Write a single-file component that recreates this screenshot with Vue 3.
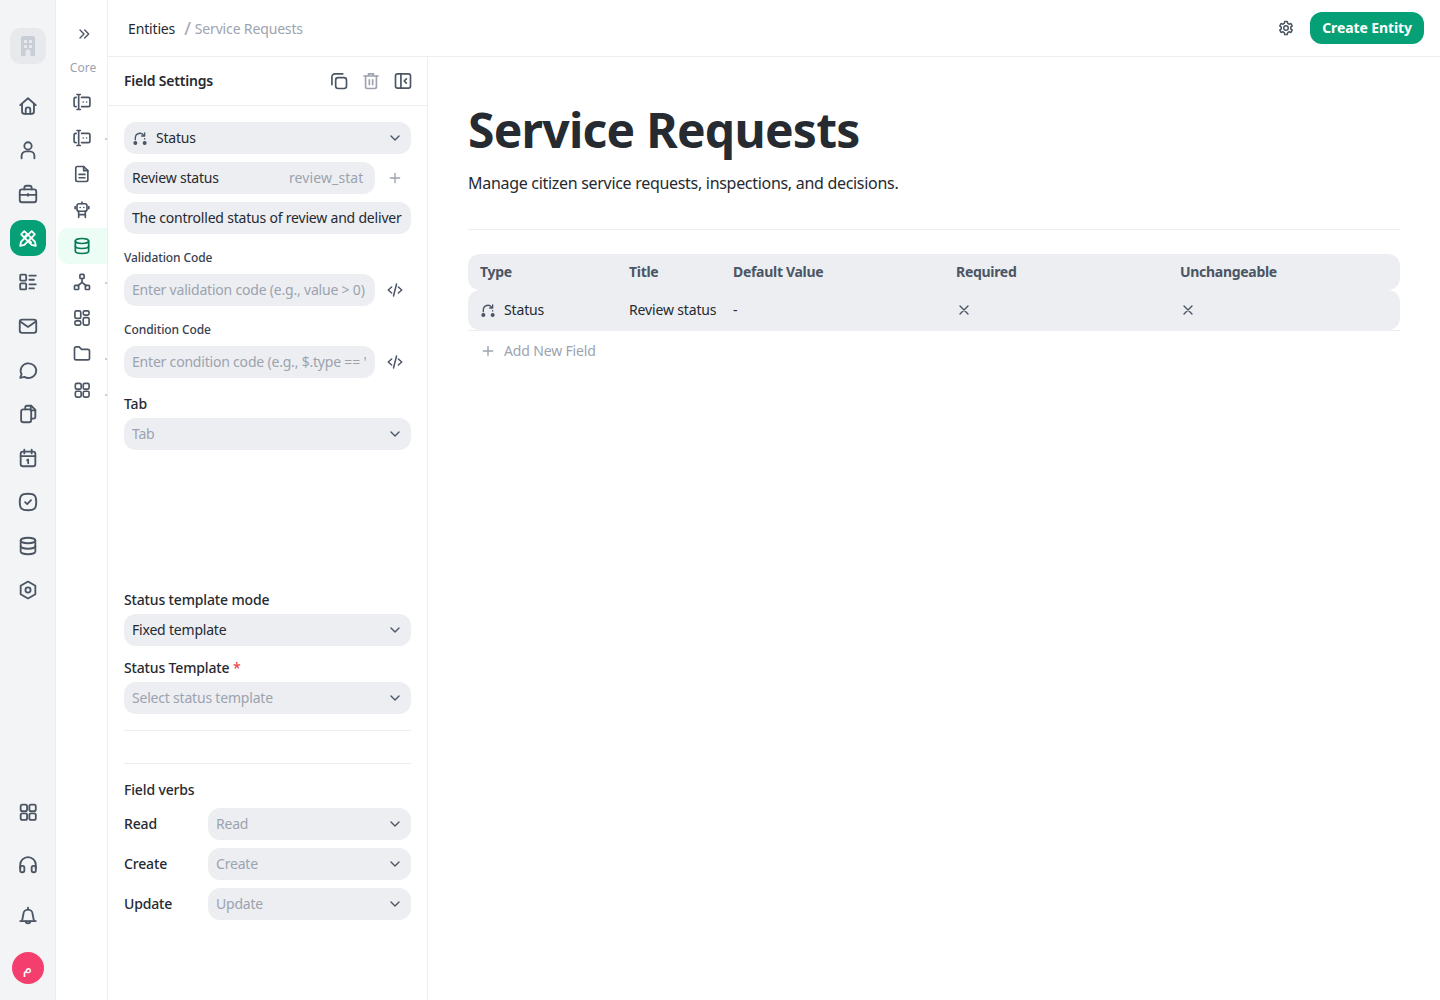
<template>
  <div class="app">
    <aside class="rail">
      <div class="logo"><svg viewBox="0 0 24 24" width="24" height="24" v-html="icons.building"></svg></div>
      <div class="rail-top">
        <div v-for="n in railTop" :key="n" class="rail-btn" :class="{ active: n === 'tools' }">
          <svg viewBox="0 0 24 24" width="22" height="22" class="ic" v-html="icons[n]"></svg>
        </div>
      </div>
      <div class="rail-bottom">
        <div v-for="n in railBottom" :key="n" class="rail-btn">
          <svg viewBox="0 0 24 24" width="22" height="22" class="ic" v-html="icons[n]"></svg>
        </div>
        <div class="avatar">م</div>
      </div>
    </aside>

    <nav class="subnav">
      <div class="expand"><svg viewBox="0 0 24 24" width="16" height="16" class="ic" v-html="icons.chevrons"></svg></div>
      <div class="core">Core</div>
      <div v-for="(n, i) in subnav" :key="i" class="sub-item" :class="{ active: n === 'database' }">
        <svg viewBox="0 0 24 24" width="20" height="20" class="ic" v-html="icons[n]"></svg>
        <i v-if="[1, 5, 7, 8].includes(i)" class="dot" :class="{ low: i > 5 }"></i>
      </div>
    </nav>

    <div class="content">
      <header class="topbar">
        <div class="crumbs">
          <span class="crumb">Entities</span>
          <span class="slash">/</span>
          <span class="crumb muted">Service Requests</span>
        </div>
        <div class="top-actions">
          <svg viewBox="0 0 24 24" width="18" height="18" class="ic" v-html="icons.gear"></svg>
          <button class="create">Create Entity</button>
        </div>
      </header>

      <div class="body">
        <section class="panel">
          <div class="panel-head">
            <span class="panel-title">Field Settings</span>
            <div class="panel-tools">
              <svg viewBox="0 0 24 24" width="20" height="20" class="ic" v-html="icons.copy"></svg>
              <svg viewBox="0 0 24 24" width="20" height="20" class="ic faded" v-html="icons.trash"></svg>
              <svg viewBox="0 0 24 24" width="20" height="20" class="ic" v-html="icons.sidebar"></svg>
            </div>
          </div>

          <div class="panel-body">
            <div class="field select">
              <svg viewBox="0 0 24 24" width="16" height="16" class="ic status-ic" v-html="icons.status"></svg>
              <span class="grow">Status</span>
              <svg viewBox="0 0 24 24" width="16" height="16" class="ic chev" v-html="icons.chevron"></svg>
            </div>

            <div class="row mt8">
              <div class="field grow-field">
                <span class="grow">Review status</span>
                <span class="key">review_stat</span>
              </div>
              <div class="side-btn"><svg viewBox="0 0 24 24" width="16" height="16" class="ic faded" v-html="icons.plus"></svg></div>
            </div>

            <div class="field mt8"><span class="clip">The controlled status of review and deliver</span></div>

            <div class="small-label">Validation Code</div>
            <div class="row">
              <div class="field grow-field ph"><span class="clip">Enter validation code (e.g., value &gt; 0)</span></div>
              <div class="side-btn"><svg viewBox="0 0 24 24" width="18" height="18" class="ic" v-html="icons.code"></svg></div>
            </div>

            <div class="small-label">Condition Code</div>
            <div class="row">
              <div class="field grow-field ph"><span class="clip">Enter condition code (e.g., $.type == '</span></div>
              <div class="side-btn"><svg viewBox="0 0 24 24" width="18" height="18" class="ic" v-html="icons.code"></svg></div>
            </div>

            <div class="label lb-tab">Tab</div>
            <div class="field select ph">
              <span class="grow">Tab</span>
              <svg viewBox="0 0 24 24" width="16" height="16" class="ic chev" v-html="icons.chevron"></svg>
            </div>

            <div class="label lb-mode">Status template mode</div>
            <div class="field select">
              <span class="grow">Fixed template</span>
              <svg viewBox="0 0 24 24" width="16" height="16" class="ic chev" v-html="icons.chevron"></svg>
            </div>

            <div class="label lb-template">Status Template <b class="req">*</b></div>
            <div class="field select ph">
              <span class="grow">Select status template</span>
              <svg viewBox="0 0 24 24" width="16" height="16" class="ic chev" v-html="icons.chevron"></svg>
            </div>

            <hr class="sep sep1" />
            <hr class="sep sep2" />

            <div class="label lb-verbs">Field verbs</div>
            <div v-for="v in verbs" :key="v" class="verb">
              <span class="verb-name">{{ v }}</span>
              <div class="field select ph verb-field">
                <span class="grow">{{ v }}</span>
                <svg viewBox="0 0 24 24" width="16" height="16" class="ic chev" v-html="icons.chevron"></svg>
              </div>
            </div>
          </div>
        </section>

        <main class="main">
          <h1>Service Requests</h1>
          <p class="sub">Manage citizen service requests, inspections, and decisions.</p>
          <div class="rule"></div>

          <div class="table">
            <div class="tr th">
              <span>Type</span><span>Title</span><span>Default Value</span><span>Required</span><span>Unchangeable</span>
            </div>
            <div class="tr td">
              <div class="type"><svg viewBox="0 0 24 24" width="16" height="16" class="ic status-ic" v-html="icons.status"></svg><span class="t">Status</span></div>
              <span class="t">Review status</span>
              <span class="t">-</span>
              <div><svg viewBox="0 0 24 24" width="16" height="16" class="ic" v-html="icons.x"></svg></div>
              <div><svg viewBox="0 0 24 24" width="16" height="16" class="ic" v-html="icons.x"></svg></div>
            </div>
          </div>
          <div class="add"><svg viewBox="0 0 24 24" width="16" height="16" class="ic faded" v-html="icons.plus"></svg><span class="t">Add New Field</span></div>
        </main>
      </div>
    </div>
  </div>
</template>

<script setup>
const railTop = ["home", "user", "briefcase", "tools", "list", "mail", "chat", "files", "calendar", "check", "database", "hexagon"];
const railBottom = ["grid", "headphones", "bell"];
const subnav = ["cursorBox", "cursorBox", "file", "robot", "database", "nodes", "layout", "folder", "grid"];
const verbs = ["Read", "Create", "Update"];

const icons = {
  building: '<path fill="#c9ced6" d="M5 4a2 2 0 0 1 2-2h10a2 2 0 0 1 2 2v18h-4.5v-4a2.5 2.5 0 0 0-5 0v4H5z"/><g fill="#e7e9ed"><rect x="8" y="6" width="3" height="3" rx=".6"/><rect x="13" y="6" width="3" height="3" rx=".6"/><rect x="8" y="11" width="3" height="3" rx=".6"/><rect x="13" y="11" width="3" height="3" rx=".6"/></g>',
  home: '<path d="M3.5 11 12 3.5 20.5 11"/><path d="M5.5 9.5V18a2.5 2.5 0 0 0 2.5 2.5h8a2.5 2.5 0 0 0 2.5-2.5V9.5"/><path d="M9.5 20.5V16a2.5 2.5 0 0 1 5 0v4.5"/>',
  user: '<circle cx="12" cy="7.5" r="4"/><path d="M5 21v-2.5a5 5 0 0 1 5-5h4a5 5 0 0 1 5 5V21"/>',
  briefcase: '<rect x="3" y="7" width="18" height="14" rx="2.5"/><path d="M8 7V5.5A2.5 2.5 0 0 1 10.5 3h3A2.5 2.5 0 0 1 16 5.5V7"/><path d="M3 13h18"/><path d="M12 12v2"/>',
  tools: '<path d="m4.5 8 3.5-3.5 11.5 11.5 1 4.500-4.500-1z"/><path d="m8 11 3-3"/><path d="M19.500 8 16 4.500 4.500 16l-1 4.500 4.500-1z"/><path d="m13.500 15 2 2"/>',
  list: '<rect x="3.500" y="4" width="6.500" height="6.500" rx="1"/><rect x="3.500" y="13.500" width="6.500" height="6.500" rx="1"/><path d="M13.500 5h7M13.500 9.500h5M13.500 14.500h7M13.500 19h5"/>',
  mail: '<rect x="3" y="5" width="18" height="14.500" rx="2.500"/><path d="m3.500 7 8.500 6 8.500-6"/>',
  chat: '<path d="M3.500 20.500 5 16.500A8.500 8 0 1 1 8 19.500z"/>',
  files: '<path d="M9 7V5a2 2 0 0 1 2-2h4.500L20 7.500V15a2 2 0 0 1-2 2h-2.500"/><path d="M15 3v5h5"/><rect x="4.500" y="7" width="11" height="14" rx="2.500"/>',
  calendar: '<rect x="4" y="5" width="16" height="16" rx="2.500"/><path d="M4 10h16M8 3v4M16 3v4"/><path d="M11 14.500l1.200-.8v4"/>',
  check: '<path d="M12 3c7 0 9 2 9 9s-2 9-9 9-9-2-9-9 2-9 9-9z"/><path d="m8.800 12.200 2.300 2.200 4.200-4.400"/>',
  database: '<ellipse cx="12" cy="6" rx="8" ry="3"/><path d="M4 6v12c0 1.700 3.600 3 8 3s8-1.300 8-3V6"/><path d="M4 12c0 1.700 3.600 3 8 3s8-1.300 8-3"/>',
  hexagon: '<path d="M12 2.800 20 7.400v9.200l-8 4.600-8-4.600V7.400z"/><circle cx="12" cy="12" r="2.800"/>',
  grid: '<rect x="4" y="4" width="7" height="7" rx="1.800"/><rect x="13.500" y="4" width="7" height="7" rx="1.800"/><rect x="4" y="13.500" width="7" height="7" rx="1.800"/><rect x="13.500" y="13.500" width="7" height="7" rx="1.800"/>',
  headphones: '<path d="M3.500 17v-4a8.500 8.500 0 0 1 17 0v4"/><rect x="3.500" y="14" width="4.500" height="7" rx="2"/><rect x="16" y="14" width="4.500" height="7" rx="2"/>',
  bell: '<path d="M3.500 17.500h17"/><path d="M5.500 17.500 7 10a5 5 0 0 1 10 0l1.500 7.500"/><path d="M12 3v2"/><path d="M9.500 17.500a2.500 2.500 0 0 0 5 0"/>',
  chevrons: '<path d="m6 6 6 6-6 6"/><path d="m13 6 6 6-6 6"/>',
  cursorBox: '<path d="M6 3h4M6 21h4M8 3v18"/><path d="M5 6.500H4.500a2 2 0 0 0-2 2v7a2 2 0 0 0 2 2H5"/><path d="M11.500 6.500h8a2 2 0 0 1 2 2v7a2 2 0 0 1-2 2h-8"/><path d="M13.500 12h.01M17.500 12h.01"/>',
  file: '<path d="M6.500 3H14l5 5v11a2 2 0 0 1-2 2H6.500a2 2 0 0 1-2-2V5a2 2 0 0 1 2-2z"/><path d="M14 3v5h5"/><path d="M8.500 12.500h7M8.500 16.500h7"/>',
  robot: '<rect x="6" y="4.500" width="12" height="9" rx="2.500"/><path d="M9.800 9h.01M14.200 9h.01"/><path d="M12 2.500v2M3.800 8v2.500M20.200 8v2.500"/><path d="M8 13.500V21M16 13.500V21M8 17.500h8"/>',
  nodes: '<rect x="9.500" y="2.800" width="5" height="5" rx="1"/><rect x="3" y="16" width="5" height="5" rx="1"/><rect x="16" y="16" width="5" height="5" rx="1"/><path d="M12 8v4.500M12 12.500l-5 4M12 12.500l5 4"/>',
  layout: '<rect x="3.500" y="3.500" width="7" height="9" rx="1.800"/><rect x="13.500" y="3.500" width="7" height="5" rx="1.800"/><rect x="3.500" y="15.500" width="7" height="5" rx="1.800"/><rect x="13.500" y="11.500" width="7" height="9" rx="1.800"/>',
  folder: '<path d="M3 5.500A2 2 0 0 1 5 3.500h3.500l3 3H19a2 2 0 0 1 2 2V17a2 2 0 0 1-2 2H5a2 2 0 0 1-2-2z"/>',
  gear: '<path d="M10.300 3.300h3.400l.6 2.600 1.700 1 2.600-.8 1.700 3-2 1.800v2.200l2 1.800-1.700 3-2.600-.8-1.700 1-.6 2.600h-3.400l-.6-2.600-1.700-1-2.600.8-1.700-3 2-1.800v-2.200l-2-1.800 1.700-3 2.600.8 1.700-1z"/><circle cx="12" cy="12" r="3"/>',
  copy: '<rect x="8" y="8" width="13" height="13" rx="3"/><path d="M16.500 3.500H7A3.500 3.500 0 0 0 3.500 7v9.500"/>',
  trash: '<path d="M3.500 6h17M9 6V3.500h6V6"/><path d="M5.500 6v13a2 2 0 0 0 2 2h9a2 2 0 0 0 2-2V6"/><path d="M10 10.500v6M14 10.500v6"/>',
  sidebar: '<rect x="3" y="3.500" width="18" height="17" rx="2.500"/><path d="M9.500 3.500v17"/><path d="m16 9.500-2.500 2.500 2.500 2.500"/>',
  status: '<path d="M5 14.500V12a7 7 0 0 1 13-3.600"/><path d="M19 4.500V9h-4.500"/><path d="M19 13v.5"/><circle cx="5" cy="19.500" r="2" fill="currentColor"/><circle cx="19" cy="19.500" r="2" fill="currentColor"/>',
  chevron: '<path d="m6 9 6 6 6-6"/>',
  plus: '<path d="M12 5v14M5 12h14"/>',
  code: '<path d="m7.500 8-4.500 4 4.500 4"/><path d="m16.500 8 4.500 4-4.500 4"/><path d="m14 4-4 16"/>',
  x: '<path d="m6 6 12 12M18 6 6 18"/>',
};
</script>

<style>
html,
body {
  margin: 0;
  background: #fff;
}
</style>

<style scoped>
.app {
  display: flex;
  height: 1000px;
  overflow: hidden;
  font-family: "Noto Sans", sans-serif;
  font-size: 14px;
  letter-spacing: -0.15px;
  color: #262a31;
}
.ic {
  display: block;
  flex: none;
  fill: none;
  stroke: #4b5563;
  color: #4b5563;
  stroke-width: 2;
  stroke-linecap: round;
  stroke-linejoin: round;
}
.ic.faded {
  stroke: #9ca3af;
  color: #9ca3af;
}

/* first rail */
.rail {
  width: 56px;
  flex: none;
  background: #f3f4f6;
  border-right: 1px solid #eceef1;
  display: flex;
  flex-direction: column;
  align-items: center;
  padding: 28px 0 16px;
  box-sizing: border-box;
}
.logo {
  width: 36px;
  height: 36px;
  border-radius: 10px;
  background: #e7e9ed;
  display: flex;
  align-items: center;
  justify-content: center;
}
.rail-top {
  margin-top: 24px;
  display: flex;
  flex-direction: column;
  gap: 8px;
}
.rail-btn {
  width: 36px;
  height: 36px;
  border-radius: 12px;
  display: flex;
  align-items: center;
  justify-content: center;
}
.rail-btn.active {
  background: #05a076;
}
.rail-btn.active .ic {
  stroke: #fff;
}
.rail-bottom {
  margin-top: auto;
  display: flex;
  flex-direction: column;
  align-items: center;
  gap: 16px;
}
.avatar {
  width: 32px;
  height: 32px;
  border-radius: 50%;
  background: #f43f6e;
  color: #fff;
  font-family: "DejaVu Sans", sans-serif;
  font-size: 15px;
  display: flex;
  align-items: center;
  justify-content: center;
  margin-top: 2px;
}

/* second rail */
.subnav {
  width: 52px;
  flex: none;
  box-sizing: border-box;
  border-right: 1px solid #eceef1;
  display: flex;
  flex-direction: column;
  padding-top: 26px;
  overflow: hidden;
}
.expand {
  height: 16px;
  display: flex;
  justify-content: center;
  padding-left: 4px;
}
.core {
  margin-top: 18px;
  height: 16px;
  line-height: 16px;
  font-size: 12px;
  letter-spacing: 0;
  color: #9ca3af;
  text-align: center;
  padding-left: 3px;
  margin-bottom: 8px;
}
.sub-item {
  position: relative;
  height: 36px;
  margin-left: 2px;
  display: flex;
  align-items: center;
  padding-left: 14px;
  border-radius: 10px 0 0 10px;
}
.sub-item.active {
  background: #ecfdf5;
}
.sub-item.active .ic {
  stroke: #047857;
}
.dot {
  position: absolute;
  right: 0;
  top: 18px;
  width: 2px;
  height: 2px;
  background: #c9ced6;
}
.dot.low {
  top: 22px;
}

/* header */
.content {
  flex: 1;
  min-width: 0;
  display: flex;
  flex-direction: column;
}
.topbar {
  height: 57px;
  flex: none;
  box-sizing: border-box;
  border-bottom: 1px solid #eceef1;
  display: flex;
  align-items: center;
  justify-content: space-between;
  padding: 0 16px 0 20px;
}
.crumbs {
  display: flex;
  align-items: center;
}
.crumb.muted {
  color: #9ca3af;
}
.slash {
  margin: 0 4px 0 9px;
  font-size: 18px;
  color: #9ca3af;
}
.top-actions {
  display: flex;
  align-items: center;
  gap: 15px;
}
.create {
  height: 32px;
  padding: 0 12px 2px;
  border: 0;
  border-radius: 12px;
  background: #05a076;
  color: #fff;
  font: 700 14px "Noto Sans", sans-serif;
  letter-spacing: -0.1px;
}

.body {
  flex: 1;
  min-height: 0;
  display: flex;
}

/* field settings */
.panel {
  width: 320px;
  flex: none;
  box-sizing: border-box;
  border-right: 1px solid #eceef1;
}
.panel-head {
  height: 49px;
  box-sizing: border-box;
  border-bottom: 1px solid #eceef1;
  padding: 0 14px 0 16px;
  display: flex;
  align-items: center;
  justify-content: space-between;
}
.panel-title {
  font-weight: 600;
  margin-top: -2px;
  letter-spacing: -0.2px;
}
.panel-tools {
  display: flex;
  gap: 12px;
}
.panel-body {
  padding: 16px 16px 0;
}
.field {
  height: 32px;
  box-sizing: border-box;
  padding: 0 8px;
  background: #eceef2;
  border-radius: 12px;
  display: flex;
  align-items: center;
  white-space: nowrap;
  overflow: hidden;
  letter-spacing: -0.2px;
}
.field.ph {
  color: #9ca3af;
}
.grow {
  flex: 1;
  min-width: 0;
  margin-top: -2px;
}
.clip {
  display: block;
  overflow: hidden;
  white-space: nowrap;
  width: 100%;
  margin-top: -2px;
}
.status-ic {
  margin-right: 8px;
}
.row {
  display: flex;
  align-items: center;
}
.grow-field {
  width: 251px;
  flex: none;
}
.side-btn {
  width: 36px;
  display: flex;
  justify-content: center;
  padding-left: 4px;
  box-sizing: border-box;
}
.key {
  width: 78px;
  overflow: hidden;
  color: #9ca3af;
  margin-top: -2px;
  letter-spacing: 0.1px;
}
.mt8 {
  margin-top: 8px;
}
.small-label {
  font-size: 12px;
  font-weight: 500;
  line-height: 16px;
  letter-spacing: -0.1px;
  color: #374151;
  margin-top: 16px;
  margin-bottom: 8px;
}
.label {
  font-weight: 500;
  line-height: 20px;
}
.lb-tab {
  margin-top: 16px;
  margin-bottom: 4px;
}
.lb-mode {
  margin-top: 140px;
  margin-bottom: 4px;
}
.lb-template {
  margin-top: 12px;
  margin-bottom: 4px;
}
.req {
  color: #ef4444;
  font-weight: 500;
}
.sep {
  border: 0;
  border-top: 1px solid #eceef1;
  margin: 0;
}
.sep1 {
  margin-top: 16px;
}
.sep2 {
  margin-top: 32px;
}
.lb-verbs {
  margin-top: 16px;
  margin-bottom: 8px;
}
.verb {
  display: flex;
  align-items: center;
  margin-bottom: 8px;
}
.verb-name {
  width: 84px;
  font-weight: 500;
  margin-top: -2px;
}
.verb-field {
  flex: 1;
}

/* main */
.main {
  flex: 1;
  min-width: 0;
  padding: 41px 40px 0;
}
h1 {
  margin: 0;
  font-size: 48px;
  line-height: 64px;
  font-weight: 700;
  letter-spacing: -0.75px;
}
.sub {
  margin: 9px 0 0;
  font-size: 16px;
  line-height: 24px;
  letter-spacing: -0.3px;
}
.rule {
  margin-top: 34px;
  border-top: 1px solid #eceef1;
}
.table {
  margin-top: 24px;
  border-bottom: 1px solid #eceef1;
}
.tr {
  display: grid;
  grid-template-columns: 149px 104px 223px 224px 1fr;
  align-items: center;
  padding: 0 12px;
  background: #eceef2;
  border-radius: 12px;
}
.th {
  height: 36px;
  padding-bottom: 2px;
  box-sizing: border-box;
  font-weight: 700;
  letter-spacing: -0.3px;
  color: #4b5563;
}
.td {
  height: 40px;
}
.t {
  margin-top: -2px;
}
.type {
  display: flex;
  align-items: center;
}
.add {
  display: flex;
  align-items: center;
  gap: 8px;
  height: 40px;
  padding-left: 12px;
  color: #9ca3af;
}
</style>
